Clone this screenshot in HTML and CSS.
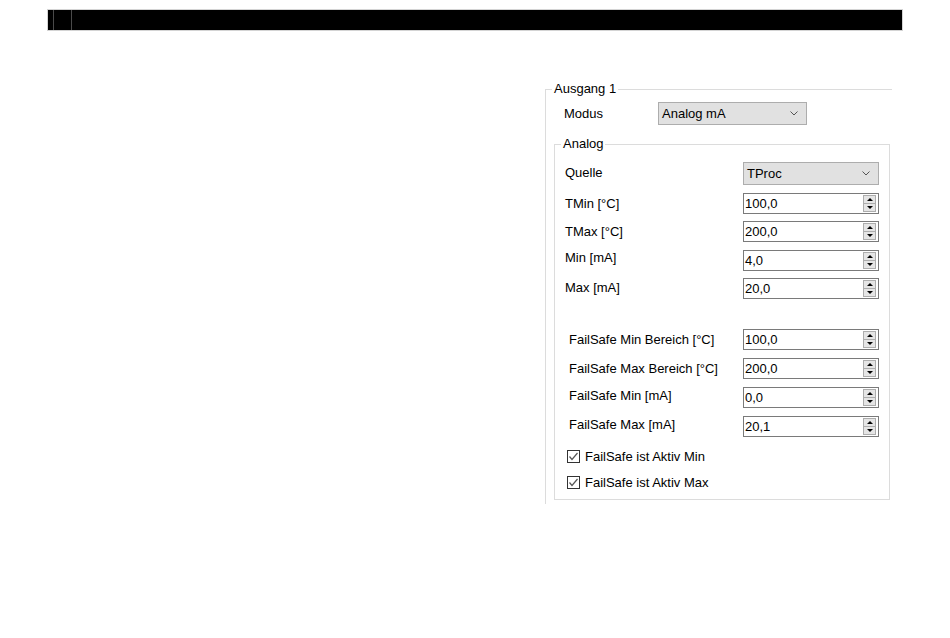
FILE: index.html
```html
<!DOCTYPE html>
<html lang="de">
<head>
<meta charset="utf-8">
<title>Ausgang 1</title>
<link rel="stylesheet" href="styles.css">
</head>
<body>
<div class="topbar">
  <div class="seg seg-a"></div>
  <div class="seg seg-b"></div>
</div>

<div class="panel">
  <fieldset class="group outer">
    <legend>Ausgang 1</legend>
    <div class="modus-row">
      <span class="modus-label">Modus</span>
      <div class="combo combo-modus">
        <span class="combo-text">Analog mA</span>
        <svg class="chev" width="8" height="5" viewBox="0 0 8 5"><polyline points="0.5,0.5 4,4 7.5,0.5" fill="none" stroke="#555" stroke-width="1"/></svg>
      </div>
    </div>

    <fieldset class="group inner">
      <legend>Analog</legend>
      <div class="rows">
        <div class="row row-quelle">
          <span class="lbl up15">Quelle</span>
          <div class="combo combo-quelle">
            <span class="combo-text">TProc</span>
            <svg class="chev" width="8" height="5" viewBox="0 0 8 5"><polyline points="0.5,0.5 4,4 7.5,0.5" fill="none" stroke="#555" stroke-width="1"/></svg>
          </div>
        </div>

        <div class="row g8">
          <span class="lbl">TMin [°C]</span>
          <div class="spin"><span class="val">100,0</span><div class="btns"><span class="btn up"></span><span class="btn down"></span></div></div>
        </div>
        <div class="row g7">
          <span class="lbl">TMax [°C]</span>
          <div class="spin"><span class="val">200,0</span><div class="btns"><span class="btn up"></span><span class="btn down"></span></div></div>
        </div>
        <div class="row g8">
          <span class="lbl up3">Min [mA]</span>
          <div class="spin"><span class="val">4,0</span><div class="btns"><span class="btn up"></span><span class="btn down"></span></div></div>
        </div>
        <div class="row g7">
          <span class="lbl up15">Max [mA]</span>
          <div class="spin"><span class="val">20,0</span><div class="btns"><span class="btn up"></span><span class="btn down"></span></div></div>
        </div>

        <div class="row g30">
          <span class="lbl fs">FailSafe Min Bereich [°C]</span>
          <div class="spin"><span class="val">100,0</span><div class="btns"><span class="btn up"></span><span class="btn down"></span></div></div>
        </div>
        <div class="row g8">
          <span class="lbl fs">FailSafe Max Bereich [°C]</span>
          <div class="spin"><span class="val">200,0</span><div class="btns"><span class="btn up"></span><span class="btn down"></span></div></div>
        </div>
        <div class="row g8">
          <span class="lbl fs up25">FailSafe Min [mA]</span>
          <div class="spin"><span class="val">0,0</span><div class="btns"><span class="btn up"></span><span class="btn down"></span></div></div>
        </div>
        <div class="row g8">
          <span class="lbl fs up25">FailSafe Max [mA]</span>
          <div class="spin"><span class="val">20,1</span><div class="btns"><span class="btn up"></span><span class="btn down"></span></div></div>
        </div>

        <div class="check first">
          <span class="box"><svg width="11" height="11" viewBox="0 0 11 11"><polyline points="1.5,5.5 4,8.5 9.5,2" fill="none" stroke="#555" stroke-width="1.2"/></svg></span>
          <span class="check-text">FailSafe ist Aktiv Min</span>
        </div>
        <div class="check">
          <span class="box"><svg width="11" height="11" viewBox="0 0 11 11"><polyline points="1.5,5.5 4,8.5 9.5,2" fill="none" stroke="#555" stroke-width="1.2"/></svg></span>
          <span class="check-text">FailSafe ist Aktiv Max</span>
        </div>
      </div>
    </fieldset>
  </fieldset>
</div>
</body>
</html>
```

FILE: styles.css
```css
html, body {
  margin: 0;
  padding: 0;
  background: #fff;
}
body {
  font-family: "Liberation Sans", Arial, sans-serif;
  font-size: 13px;
  color: #000;
}

.topbar {
  margin: 9px 47px 0 47px;
  height: 20px;
  background: #000;
  border: 1px solid #d4d4d4;
  display: flex;
}
.seg {
  height: 100%;
  border-right: 1px solid #4a4a4a;
}
.seg-a { width: 5px; }
.seg-b { width: 17px; }

.panel {
  margin: 51px 0 0 545px;
  width: 347px;
}

.group {
  margin: 0;
  padding: 0;
  min-width: 0;
  border: 1px solid #dcdcdc;
}
.group legend {
  margin-left: 6px;
  padding: 0 2px;
  line-height: 14px;
  font-size: 13px;
}
.outer {
  border-right: none;
  border-bottom: none;
  padding-bottom: 4px;
}

.modus-row {
  display: flex;
  align-items: center;
  padding: 6px 0 0 18px;
}
.modus-label {
  width: 94px;
}

.combo {
  box-sizing: border-box;
  height: 23px;
  background: #e1e1e1;
  border: 1px solid #adadad;
  display: flex;
  align-items: center;
  padding: 0 8px 0 3px;
}
.combo-text { flex: 1; }
.combo-modus { width: 149px; }
.combo-quelle { width: 136px; }
.chev { display: block; }

.inner {
  margin: 12px 0 0 8px;
  width: 336px;
  box-sizing: border-box;
}
.rows {
  padding: 11px 10px 9px 10px;
  display: flex;
  flex-direction: column;
}
.row {
  display: flex;
  align-items: center;
  justify-content: space-between;
}
.g7 { margin-top: 7px; }
.g8 { margin-top: 8px; }
.g30 { margin-top: 30px; }

.lbl.fs { padding-left: 4px; }
.lbl.up15 { padding-bottom: 3px; }
.lbl.up25 { padding-bottom: 5px; }
.lbl.up3 { padding-bottom: 6px; }

.spin {
  box-sizing: border-box;
  width: 136px;
  height: 21px;
  border: 1px solid #7a7a7a;
  background: #fff;
  display: flex;
  align-items: center;
}
.val {
  flex: 1;
  padding-left: 1px;
}
.btns {
  align-self: stretch;
  width: 13px;
  margin: 1px 2px 1px 0;
  display: flex;
  flex-direction: column;
}
.btn {
  flex: 1;
  box-sizing: border-box;
  border: 1px solid #adadad;
  background: #e5e5e5;
  display: flex;
  align-items: center;
  justify-content: center;
}
.btn.down { border-top: none; }
.btn.up::before,
.btn.down::before {
  content: "";
  width: 0;
  height: 0;
  border-left: 3px solid transparent;
  border-right: 3px solid transparent;
}
.btn.up::before { border-bottom: 3px solid #000; }
.btn.down::before { border-top: 3px solid #000; }

.check {
  display: flex;
  align-items: center;
  padding-left: 2px;
  line-height: 15px;
}
.check.first { margin-top: 12px; }
.check + .check { margin-top: 11px; }
.box {
  box-sizing: border-box;
  width: 13px;
  height: 13px;
  border: 1px solid #333;
  background: #fff;
  display: flex;
  align-items: center;
  justify-content: center;
  margin-right: 5px;
}
.box svg { display: block; }
```
